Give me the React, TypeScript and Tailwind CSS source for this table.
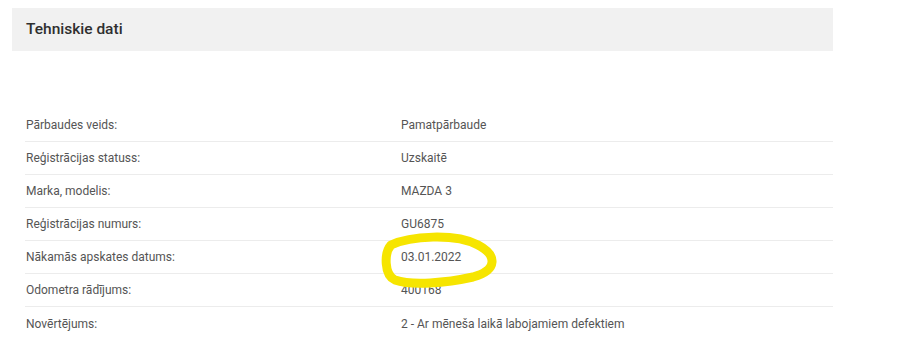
import React from "react";

const rows: [string, string][] = [
  ["Pārbaudes veids:", "Pamatpārbaude"],
  ["Reģistrācijas statuss:", "Uzskaitē"],
  ["Marka, modelis:", "MAZDA 3"],
  ["Reģistrācijas numurs:", "GU6875"],
  ["Nākamās apskates datums:", "03.01.2022"],
  ["Odometra rādījums:", "400168"],
  ["Novērtējums:", "2 - Ar mēneša laikā labojamiem defektiem"],
];

export default function App() {
  return (
    <div
      className="relative w-[900px] h-[345px] bg-white overflow-hidden"
      style={{ fontFamily: "Roboto, 'Liberation Sans', sans-serif" }}
    >
      <div className="ml-[12px] w-[821px] pt-[8px]">
        <div className="h-[43px] bg-[#f1f1f1] flex items-center pl-[14px]">
          <span className="text-[15.5px] font-medium text-[#2f2f2f]">Tehniskie dati</span>
        </div>
        <div className="mt-[58px] ml-[13px] divide-y divide-[#ececec]">
          {rows.map(([label, value]) => (
            <div key={label} className="flex items-center h-[33px] text-[12px] text-[#555555]">
              <div className="w-[376px] pl-[1px]">{label}</div>
              <div>{value}</div>
            </div>
          ))}
        </div>
      </div>
      <svg
        className="absolute left-0 top-0 pointer-events-none"
        width="900"
        height="345"
        viewBox="0 0 900 345"
      >
        <path
          d="M391 245 C 410 236, 455 233, 478 245 C 497 255, 498 270, 473 277 C 446 283, 412 286, 395 280 C 384 275, 384 253, 391 245"
          fill="none"
          stroke="#f6e500"
          strokeWidth="9"
          strokeLinecap="round"
          strokeLinejoin="round"
        />
      </svg>
    </div>
  );
}
